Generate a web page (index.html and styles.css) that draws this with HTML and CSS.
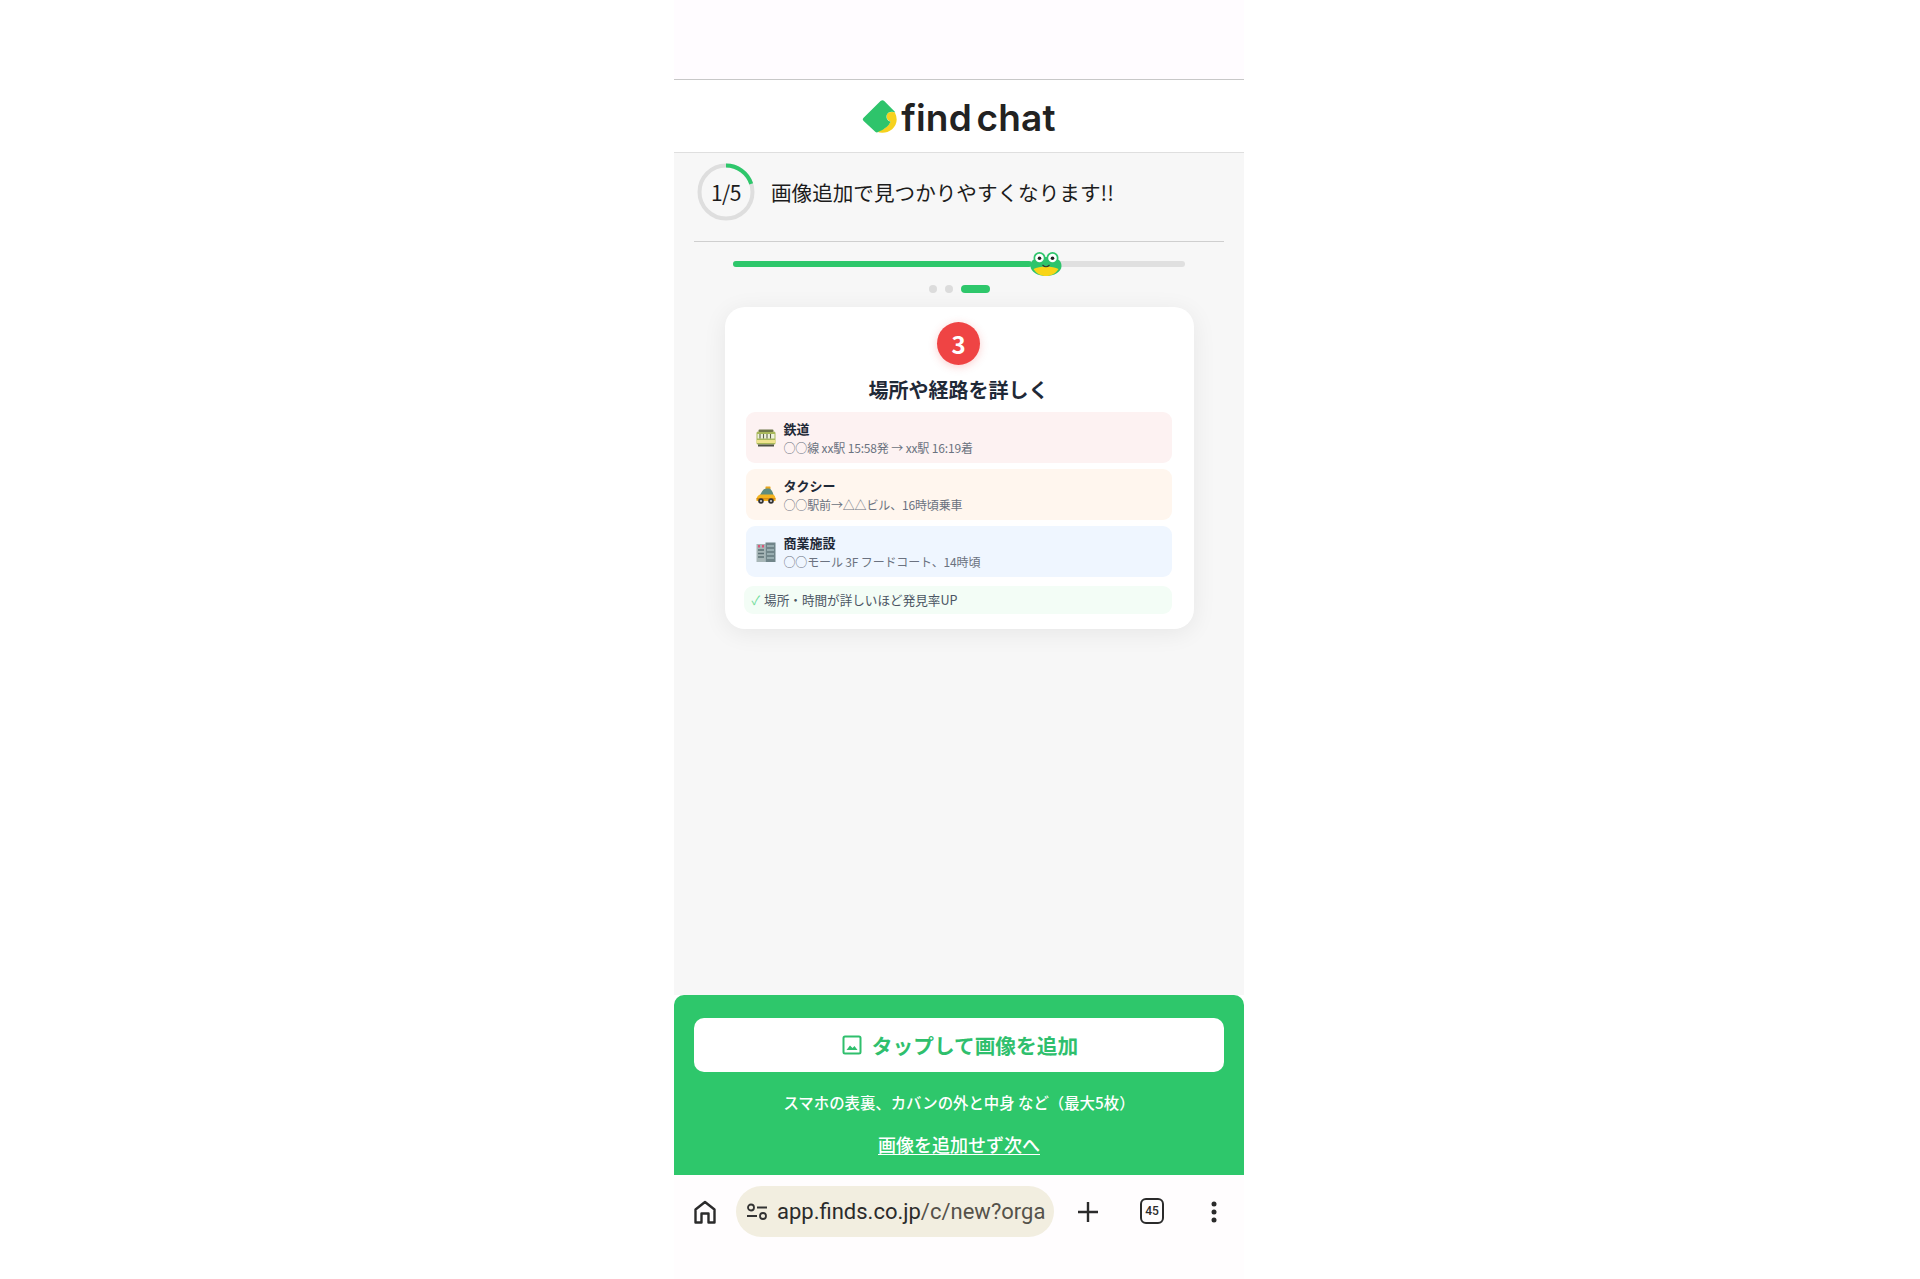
FILE: index.html
```html
<!doctype html>
<html lang="ja">
	<head>
		<meta name="viewport" content="width=device-width, initial-scale=1.0">
		<title>find chat</title>
		<link rel="stylesheet" href="styles.css">
	</head>
	<body>
		<div class="phone">
			<div class="status"></div>

			<header class="brand">
				<svg class="brand__mark" viewBox="0 0 34 34" width="36" height="36">
					<path d="M24 13.500 Q27 11.500 31 12.500 Q35.500 22 28.500 28.500 Q22 33.500 14 31 Q24 28 27 21.500 Q21.500 19 24 13.500Z" fill="#f6d21e"/>
					<path d="M1.300 18 L17.500 2 Q19.500 0.500 21 2 L31.500 12.500 Q25 11 23.300 15 Q22 19.500 27 21.500 Q24.500 27.500 15.500 31 Q14 32.500 12.500 31 L1.300 20.500 Q0 19.300 1.300 18Z" fill="#2ec46b"/>
				</svg>
				<span class="brand__name">find chat</span>
			</header>

			<main class="main">
				<section class="step">
					<svg class="step__ring" viewBox="0 0 58 58" width="58" height="58">
						<circle cx="29" cy="29" r="26.500" fill="none" stroke="#dedede" stroke-width="4"/>
						<path d="M29 2.500 A26.500 26.500 0 0 1 54.200 20.800" fill="none" stroke="#2ec76b" stroke-width="4"/>
					</svg>
					<span class="step__count">1/5</span>
					<p class="step__text">画像追加で見つかりやすくなります!!</p>
				</section>

				<div class="slider">
					<div class="slider__fill"></div>
					<svg class="slider__frog" viewBox="0 0 32 24" width="32" height="24">
						<circle cx="9.500" cy="6" r="6" fill="#2ec46b"/>
						<circle cx="22.500" cy="6" r="6" fill="#2ec46b"/>
						<path d="M0.500 14 C0.500 8 5 5 16 5 C27 5 31.500 8 31.500 14 C31.500 20 24 24 16 24 C8 24 0.500 20 0.500 14Z" fill="#2ec46b"/>
						<path d="M3.500 17 C9 13.500 23 13.500 28.500 17 C26 21.500 21 24 16 24 C11 24 6 21.500 3.500 17Z" fill="#f8d516"/>
						<circle cx="9.500" cy="6" r="4.300" fill="#fff"/>
						<circle cx="22.500" cy="6" r="4.300" fill="#fff"/>
						<circle cx="9.500" cy="6.200" r="1.800" fill="#222"/>
						<circle cx="22.500" cy="6.200" r="1.800" fill="#222"/>
						<path d="M12.500 13 Q16 16.500 19.500 13" fill="none" stroke="#333" stroke-width="1.100"/>
					</svg>
				</div>

				<div class="dots">
					<span class="dots__dot"></span>
					<span class="dots__dot"></span>
					<span class="dots__pill"></span>
				</div>

				<article class="card">
					<div class="card__badge">3</div>
					<h2 class="card__title">場所や経路を詳しく</h2>

					<div class="row row--red">
						<svg class="row__icon" viewBox="0 0 20 18" width="20" height="18">
							<rect x="0.500" y="2.500" width="19" height="13" rx="1.500" fill="#a8b85a"/>
							<rect x="2.500" y="0.500" width="15" height="2.500" rx="1" fill="#6f7748"/>
							<rect x="1.500" y="5" width="17" height="4.500" fill="#eef2dc"/>
							<path d="M4 5 V9.500 M7.500 5 V9.500 M11 5 V9.500 M14.500 5 V9.500" stroke="#5c6248" stroke-width="1.100"/>
							<rect x="0.500" y="11" width="19" height="3" fill="#efe38e"/>
							<rect x="2" y="15.500" width="16" height="2" fill="#4d5044"/>
						</svg>
						<div class="row__body">
							<div class="row__name">鉄道</div>
							<div class="row__note">○○線 xx駅 15:58発 → xx駅 16:19着</div>
						</div>
					</div>

					<div class="row row--orange">
						<svg class="row__icon" viewBox="0 0 20 18" width="20" height="18">
							<rect x="9.500" y="0.500" width="5" height="2.500" rx="0.500" fill="#e8a51c"/>
							<path d="M4 9 Q6.500 3 10 2.500 H13 Q16 3 17.500 9Z" fill="#5e8d7f"/>
							<path d="M0.500 13 Q1 9.500 4 8.500 H17 Q19.500 9.500 19.500 13 V15 H0.500Z" fill="#f4b41f"/>
							<rect x="0.500" y="12" width="19" height="1.500" fill="#d98d12"/>
							<circle cx="5" cy="15" r="2.800" fill="#333"/>
							<circle cx="15" cy="15" r="2.800" fill="#333"/>
							<circle cx="5" cy="15" r="1.100" fill="#cfcfcf"/>
							<circle cx="15" cy="15" r="1.100" fill="#cfcfcf"/>
						</svg>
						<div class="row__body">
							<div class="row__name">タクシー</div>
							<div class="row__note">○○駅前→△△ビル、16時頃乗車</div>
						</div>
					</div>

					<div class="row row--blue">
						<svg class="row__icon" viewBox="0 0 20 20" width="20" height="20">
							<rect x="0.500" y="2" width="9" height="18" fill="#a7b6b7"/>
							<rect x="9.500" y="0.500" width="10" height="19.500" fill="#71868a"/>
							<rect x="2" y="3" width="2" height="2.500" fill="#d9577a"/>
							<rect x="6" y="3" width="2" height="2.500" fill="#d9577a"/>
							<path d="M2 8 H8 M2 11.500 H8 M2 15 H8" stroke="#5e7176" stroke-width="1.600"/>
							<path d="M11 4 H18 M11 8 H18 M11 12 H18 M11 16 H18" stroke="#a6bcbe" stroke-width="1.600"/>
						</svg>
						<div class="row__body">
							<div class="row__name">商業施設</div>
							<div class="row__note">○○モール 3F フードコート、14時頃</div>
						</div>
					</div>

					<div class="tip"><span class="tip__check">✓</span>場所・時間が詳しいほど発見率UP</div>
				</article>
			</main>

			<section class="action">
				<button class="action__button">
					<svg viewBox="0 0 20 20" width="20" height="20">
						<rect x="1.500" y="1.500" width="17" height="17" rx="1.500" fill="none" stroke="#2fbf6d" stroke-width="2"/>
						<path d="M4.500 15 L8 10.500 L10.500 13 L12.500 11 L15.500 15Z" fill="#2fbf6d"/>
					</svg>
					タップして画像を追加
				</button>
				<p class="action__note">スマホの表裏、カバンの外と中身 など（最大5枚）</p>
				<a class="action__skip">画像を追加せず次へ</a>
			</section>

			<nav class="browser">
				<svg class="browser__home" viewBox="0 0 24 24" width="24" height="26">
					<path d="M2.500 22.500 V9.500 L12 2 L21.500 9.500 V22.500 H15.500 V13.500 H8.500 V22.500Z" fill="none" stroke="#2b2b2b" stroke-width="2.400" stroke-linejoin="round"/>
				</svg>
				<div class="browser__url">
					<svg viewBox="0 0 22 18" width="22" height="18">
						<circle cx="5" cy="4.500" r="3" fill="none" stroke="#333" stroke-width="1.800"/>
						<path d="M11 4.500 H21 M1 13 H11" stroke="#333" stroke-width="1.800"/>
						<circle cx="17" cy="13" r="3" fill="none" stroke="#333" stroke-width="1.800"/>
					</svg>
					<span class="browser__text"><b>app.finds.co.jp</b>/c/new?orga</span>
				</div>
				<svg class="browser__plus" viewBox="0 0 22 22" width="22" height="22">
					<path d="M11 1 V21 M1 11 H21" stroke="#2b2b2b" stroke-width="2.400"/>
				</svg>
				<span class="browser__tabs">45</span>
				<svg class="browser__more" viewBox="0 0 6 24" width="6" height="24">
					<circle cx="3" cy="4" r="2.500" fill="#2b2b2b"/>
					<circle cx="3" cy="12" r="2.500" fill="#2b2b2b"/>
					<circle cx="3" cy="20" r="2.500" fill="#2b2b2b"/>
				</svg>
			</nav>
		</div>
	</body>
</html>
```

FILE: styles.css
```css
body {
	margin: 0;
	padding-right: 2px;
	background-color: #fff;
	font-family: "Noto Sans CJK JP", "Noto Sans", sans-serif;
	color: #1c1c1c;
}
p, h2 {
	margin: 0;
}

.phone {
	width: 570px;
	height: 1279px;
	margin: 0 auto;
	display: flex;
	flex-direction: column;
}

.status {
	height: 80px;
	flex: none;
	background-color: #fffcff;
	border-bottom: 1.5px solid #c8c8c8;
	box-sizing: border-box;
}

.brand {
	height: 73px;
	flex: none;
	display: flex;
	align-items: center;
	justify-content: center;
	gap: 3px;
	padding-top: 2px;
	background-color: #fff;
	border-bottom: 1px solid #dfdfdf;
	box-sizing: border-box;
}
.brand__mark {
	flex: none;
}
.brand__name {
	font-family: Inter, sans-serif;
	font-weight: 600;
	font-size: 37px;
	line-height: 1;
	letter-spacing: 0.2px;
	word-spacing: -5px;
	color: #222;
}

.main {
	flex: 1;
	background-color: #f7f7f7;
	padding: 0 20px;
	display: flex;
	flex-direction: column;
}

.step {
	position: relative;
	display: flex;
	align-items: center;
	gap: 16px;
	height: 89px;
	flex: none;
	border-bottom: 1.5px solid #cfcfcf;
	box-sizing: border-box;
	padding-left: 3px;
	padding-bottom: 9.500px;
}
.step__ring {
	flex: none;
}
.step__count {
	position: absolute;
	left: 3px;
	top: 0;
	width: 58px;
	height: 78px;
	line-height: 78px;
	text-align: center;
	font-size: 21px;
	letter-spacing: -0.5px;
}
.step__text {
	font-size: 20.600px;
}

.slider {
	position: relative;
	flex: none;
	height: 6px;
	margin: 19px 39px 0;
	background-color: #e0e0e0;
	border-radius: 3px;
}
.slider__fill {
	width: 299px;
	height: 100%;
	background-color: #2ec76b;
	border-radius: 3px;
}
.slider__frog {
	position: absolute;
	left: 297px;
	top: -9px;
}

.dots {
	flex: none;
	display: flex;
	align-items: center;
	justify-content: center;
	gap: 8px;
	margin-top: 18px;
	height: 8px;
}
.dots__dot {
	width: 8px;
	height: 8px;
	border-radius: 50%;
	background-color: #dcdcdc;
}
.dots__pill {
	width: 29px;
	height: 8px;
	border-radius: 4px;
	background-color: #2ec76b;
}

.card {
	flex: none;
	width: 469px;
	height: 322px;
	margin: 14px auto 0;
	box-sizing: border-box;
	padding: 15px 22px 0 21px;
	background-color: #fff;
	border-radius: 20px;
	box-shadow: 0 4px 24px rgba(0,0,0,0.07);
	display: flex;
	flex-direction: column;
}
.card__badge {
	flex: none;
	align-self: center;
	width: 43px;
	height: 43px;
	border-radius: 50%;
	background-color: #ef4444;
	box-shadow: 0 2px 8px rgba(239,68,68,0.25);
	color: #fff;
	font-size: 24px;
	font-weight: 700;
	line-height: 43px;
	text-align: center;
}
.card__title {
	flex: none;
	margin-top: 9px;
	height: 31px;
	line-height: 31px;
	text-align: center;
	font-size: 20px;
	font-weight: 700;
	color: #1f2937;
}

.row {
	flex: none;
	display: flex;
	align-items: center;
	gap: 8px;
	height: 51px;
	margin-bottom: 6px;
	padding-left: 10px;
	box-sizing: border-box;
	border-radius: 9px;
}
.row--red {
	margin-top: 7px;
	background-color: #fdf2f2;
}
.row--orange {
	background-color: #fff6ee;
}
.row--blue {
	background-color: #eff6ff;
}
.row__icon {
	flex: none;
}
.row__name {
	font-size: 13px;
	font-weight: 700;
	line-height: 19px;
	color: #1f2937;
}
.row__note {
	font-size: 12px;
	line-height: 19px;
	color: #6b7280;
	letter-spacing: -0.15px;
}

.tip {
	flex: none;
	height: 28px;
	margin: 3px 0 0 -2px;
	padding-left: 8px;
	border-radius: 9px;
	background-color: #f3fdf6;
	font-size: 12.600px;
	line-height: 28px;
	color: #4b5563;
}
.tip__check {
	color: #6fdc9a;
	margin-right: 4px;
}

.action {
	flex: none;
	height: 180px;
	box-sizing: border-box;
	padding: 23px 20px 0;
	background-color: #2ec76b;
	border-radius: 10px 10px 0 0;
	display: flex;
	flex-direction: column;
	align-items: center;
}
.action__button {
	width: 100%;
	height: 54px;
	flex: none;
	display: flex;
	align-items: center;
	justify-content: center;
	gap: 10px;
	padding: 0 0 0 2px;
	border: none;
	border-radius: 10px;
	background-color: #fff;
	color: #2fbf6d;
	font-family: inherit;
	font-size: 20.700px;
	font-weight: 700;
}
.action__note {
	margin-top: 19px;
	font-size: 15.400px;
	font-weight: 500;
	line-height: 22px;
	color: #fff;
}
.action__skip {
	margin-top: 19px;
	font-size: 18px;
	font-weight: 500;
	line-height: 24px;
	color: #fff;
	text-decoration: underline;
	text-underline-offset: 2px;
}

.browser {
	flex: none;
	height: 104px;
	box-sizing: border-box;
	padding: 11px 0 0 18px;
	background-color: #fffdfe;
	display: flex;
	align-items: flex-start;
}
.browser__home {
	flex: none;
	margin: 13px 0 0 1px;
}
.browser__url {
	flex: none;
	width: 318px;
	height: 51px;
	margin-left: 19px;
	box-sizing: border-box;
	padding: 0 9px 0 10px;
	border-radius: 26px;
	background-color: #f2eee0;
	display: flex;
	align-items: center;
	gap: 9px;
}
.browser__url svg {
	flex: none;
}
.browser__text {
	flex: 1;
	min-width: 0;
	font-family: Roboto, sans-serif;
	font-size: 22px;
	color: #55524a;
	white-space: nowrap;
	overflow: hidden;
}
.browser__text b {
	font-weight: 400;
	color: #2b2b2b;
}
.browser__plus {
	flex: none;
	margin: 15px 0 0 23px;
}
.browser__tabs {
	flex: none;
	width: 24px;
	height: 26px;
	margin: 12px 0 0 41px;
	box-sizing: border-box;
	border: 2px solid #2b2b2b;
	border-radius: 6px;
	font-family: Roboto, sans-serif;
	font-size: 12px;
	font-weight: 500;
	line-height: 22px;
	text-align: center;
	color: #2b2b2b;
}
.browser__more {
	flex: none;
	margin: 14px 0 0 47px;
}
```
